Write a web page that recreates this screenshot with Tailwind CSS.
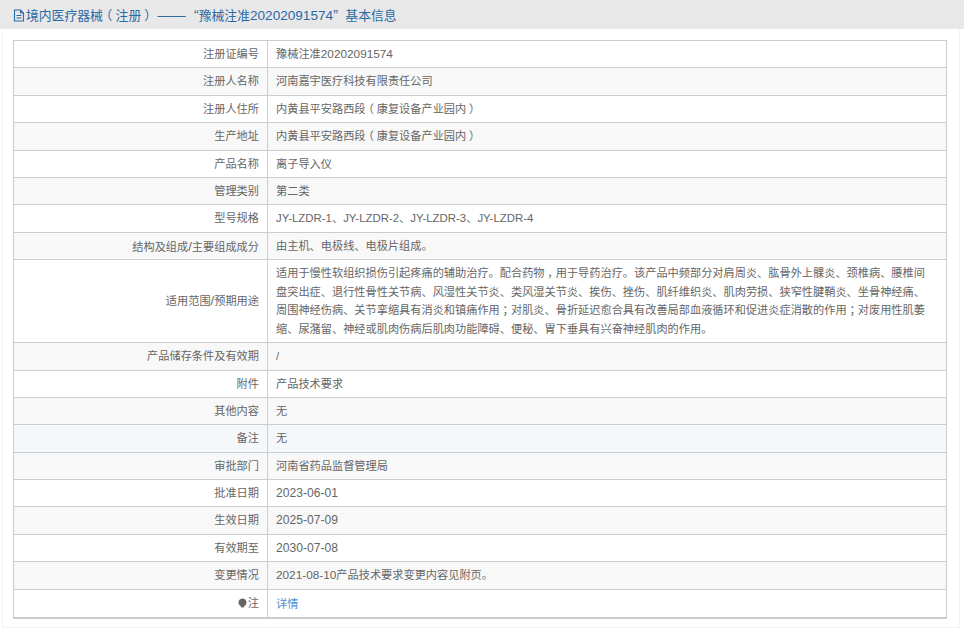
<!DOCTYPE html>
<html><head><meta charset="utf-8"><script src="https://cdn.jsdelivr.net/npm/@tailwindcss/browser@4"></script></head>
<body class="bg-white font-['Liberation_Sans','Noto_Sans_CJK_SC',sans-serif] text-[11.2px] text-[#666] overflow-hidden">
<div class="w-[964px] h-[639px] bg-white">
<div class="h-[29px] bg-[#e8e8e8] flex items-center pt-[2px] pl-[13px] text-[12.8px] text-[#2a6aa5] whitespace-pre">
<svg class="w-[12px] h-[13px] mr-px" viewBox="0 0 12 13" fill="none" stroke="#2a6aa5" stroke-width="1.1"><path d="M1.5 1h6l3 3v8h-9z M7.5 1v3h3 M3.5 6.5h5 M3.5 9h5"/></svg>
<span>境内医疗器械<span class="inline-block w-[1em] text-center [font-feature-settings:'halt']">（</span>注册<span class="inline-block w-[1em] text-center [font-feature-settings:'halt']">）</span> <span class="inline-block w-[33px] text-[14px]">——</span> <span class="text-[14px]">“</span>豫械注准<span class="text-[13.6px]">20202091574</span><span class="text-[14px] mr-[4px]">”</span> 基本信息</span></div>
<div class="ml-[2px] w-[958px] h-[599px] border-x border-b border-[#f4f4f4] pt-[11px] pl-[10px]">
<div class="w-[934px] border border-[#ccc] border-b-2 divide-y divide-[#ccc]">
<div class="flex h-[27.4px] bg-white"><div class="w-[254px] pr-[8px] text-right border-r border-[#ccc] leading-[27px]">注册证编号</div><div class="pl-[8px] leading-[27px]">豫械注准<span class="text-[11.8px]">20202091574</span></div></div>
<div class="flex h-[27.4px] bg-[#f8f8f8]"><div class="w-[254px] pr-[8px] text-right border-r border-[#ccc] leading-[27px]">注册人名称</div><div class="pl-[8px] leading-[27px]">河南嘉宇医疗科技有限责任公司</div></div>
<div class="flex h-[27.4px] bg-white"><div class="w-[254px] pr-[8px] text-right border-r border-[#ccc] leading-[27px]">注册人住所</div><div class="pl-[8px] leading-[27px]">内黄县平安路西段<span class="inline-block w-[1em] text-center [font-feature-settings:'halt']">（</span>康复设备产业园内<span class="inline-block w-[1em] text-center [font-feature-settings:'halt']">）</span></div></div>
<div class="flex h-[27.4px] bg-[#f8f8f8]"><div class="w-[254px] pr-[8px] text-right border-r border-[#ccc] leading-[27px]">生产地址</div><div class="pl-[8px] leading-[27px]">内黄县平安路西段<span class="inline-block w-[1em] text-center [font-feature-settings:'halt']">（</span>康复设备产业园内<span class="inline-block w-[1em] text-center [font-feature-settings:'halt']">）</span></div></div>
<div class="flex h-[27.4px] bg-white"><div class="w-[254px] pr-[8px] text-right border-r border-[#ccc] leading-[27px]">产品名称</div><div class="pl-[8px] leading-[27px]">离子导入仪</div></div>
<div class="flex h-[27.4px] bg-[#f8f8f8]"><div class="w-[254px] pr-[8px] text-right border-r border-[#ccc] leading-[27px]">管理类别</div><div class="pl-[8px] leading-[27px]">第二类</div></div>
<div class="flex h-[27.4px] bg-white"><div class="w-[254px] pr-[8px] text-right border-r border-[#ccc] leading-[27px]">型号规格</div><div class="pl-[8px] leading-[27px]"><span class="text-[11.4px]">JY-LZDR-1</span>、<span class="text-[11.4px]">JY-LZDR-2</span>、<span class="text-[11.4px]">JY-LZDR-3</span>、<span class="text-[11.4px]">JY-LZDR-4</span></div></div>
<div class="flex h-[27.4px] bg-[#f8f8f8]"><div class="w-[254px] pr-[8px] text-right border-r border-[#ccc] leading-[27px]">结构及组成<span class="text-[13px]">/</span>主要组成成分</div><div class="pl-[8px] leading-[27px]">由主机、电极线、电极片组成。</div></div>
<div class="flex h-[83px] bg-white"><div class="w-[254px] pr-[8px] text-right border-r border-[#ccc] flex items-center justify-end">适用范围<span class="text-[13px]">/</span>预期用途</div><div class="pl-[8px] pt-[4px] leading-[18.5px] whitespace-nowrap">适用于慢性软组织损伤引起疼痛的辅助治疗。配合药物<span class="inline-block w-[1em] text-center [font-feature-settings:'halt']">，</span>用于导药治疗。该产品中频部分对肩周炎、肱骨外上髁炎、颈椎病、腰椎间<br>盘突出症、退行性骨性关节病、风湿性关节炎、类风湿关节炎、挨伤、挫伤、肌纤维织炎、肌肉劳损、狭窄性腱鞘炎、坐骨神经痛、<br>周围神经伤病、关节挛缩具有消炎和镇痛作用<span class="inline-block w-[1em] text-center [font-feature-settings:'halt']">；</span>对肌炎、骨折延迟愈合具有改善局部血液循环和促进炎症消散的作用<span class="inline-block w-[1em] text-center [font-feature-settings:'halt']">；</span>对废用性肌萎<br>缩、尿潴留、神经或肌肉伤病后肌肉功能障碍、便秘、胃下垂具有兴奋神经肌肉的作用。</div></div>
<div class="flex h-[27.4px] bg-[#f8f8f8]"><div class="w-[254px] pr-[8px] text-right border-r border-[#ccc] leading-[27px]">产品储存条件及有效期</div><div class="pl-[8px] leading-[27px]">/</div></div>
<div class="flex h-[27.4px] bg-white"><div class="w-[254px] pr-[8px] text-right border-r border-[#ccc] leading-[27px]">附件</div><div class="pl-[8px] leading-[27px]">产品技术要求</div></div>
<div class="flex h-[27.4px] bg-[#f8f8f8]"><div class="w-[254px] pr-[8px] text-right border-r border-[#ccc] leading-[27px]">其他内容</div><div class="pl-[8px] leading-[27px]">无</div></div>
<div class="flex h-[27.4px] bg-[#f5f8fb]"><div class="w-[254px] pr-[8px] text-right border-r border-[#ccc] leading-[27px]">备注</div><div class="pl-[8px] leading-[27px]">无</div></div>
<div class="flex h-[27.4px] bg-[#f8f8f8]"><div class="w-[254px] pr-[8px] text-right border-r border-[#ccc] leading-[27px]">审批部门</div><div class="pl-[8px] leading-[27px]">河南省药品监督管理局</div></div>
<div class="flex h-[27.4px] bg-white"><div class="w-[254px] pr-[8px] text-right border-r border-[#ccc] leading-[27px]">批准日期</div><div class="pl-[8px] leading-[27px] text-[12.1px]">2023-06-01</div></div>
<div class="flex h-[27.4px] bg-[#f8f8f8]"><div class="w-[254px] pr-[8px] text-right border-r border-[#ccc] leading-[27px]">生效日期</div><div class="pl-[8px] leading-[27px] text-[12.1px]">2025-07-09</div></div>
<div class="flex h-[27.4px] bg-white"><div class="w-[254px] pr-[8px] text-right border-r border-[#ccc] leading-[27px]">有效期至</div><div class="pl-[8px] leading-[27px] text-[12.1px]">2030-07-08</div></div>
<div class="flex h-[27.4px] bg-[#f8f8f8]"><div class="w-[254px] pr-[8px] text-right border-r border-[#ccc] leading-[27px]">变更情况</div><div class="pl-[8px] leading-[27px]"><span class="text-[11.8px]">2021-08-10</span>产品技术要求变更内容见附页。</div></div>
<div class="flex h-[27.4px] bg-white"><div class="w-[254px] pr-[8px] border-r border-[#ccc] leading-[27px] flex items-center justify-end"><svg class="w-[9px] h-[10px] mr-px" viewBox="0 0 9 10"><path d="M4.5 0.5a4 4 0 0 1 2.2 7.3L5.5 9.5h-2L2.3 7.8A4 4 0 0 1 4.5 0.5z" fill="#666"/></svg>注</div><div class="pl-[8px] leading-[28px] text-[11.2px] text-[#4a90d9]">详情</div></div>
</div>
</div>
</div>
</body></html>
